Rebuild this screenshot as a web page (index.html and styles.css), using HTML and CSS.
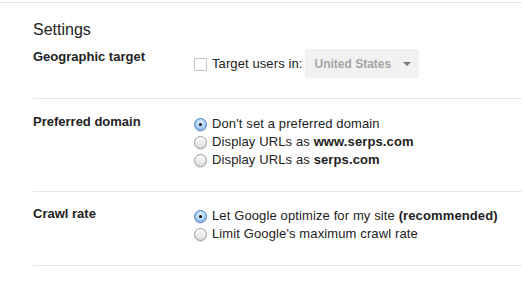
FILE: index.html
```html
<!DOCTYPE html>
<html>
<head>
<meta charset="utf-8">
<link rel="stylesheet" href="styles.css">
</head>
<body>
<div class="page">
  <h1 class="title">Settings</h1>
  <div class="row row-first">
    <div class="label">Geographic target</div>
    <div class="geo">
      <span class="checkbox"></span>
      <span class="opt-text">Target users in:</span>
      <span class="select"><span class="select-text">United States</span><span class="arrow"></span></span>
    </div>
  </div>
  <div class="row">
    <div class="label">Preferred domain</div>
    <div class="options">
      <div class="option"><span class="radio checked"></span><span>Don't set a preferred domain</span></div>
      <div class="option"><span class="radio"></span><span>Display URLs as <b>www.serps.com</b></span></div>
      <div class="option"><span class="radio"></span><span>Display URLs as <b>serps.com</b></span></div>
    </div>
  </div>
  <div class="row row-last">
    <div class="label">Crawl rate</div>
    <div class="options">
      <div class="option"><span class="radio checked"></span><span>Let Google optimize for my site <b>(recommended)</b></span></div>
      <div class="option"><span class="radio"></span><span>Limit Google's maximum crawl rate</span></div>
    </div>
  </div>
</div>
</body>
</html>
```
FILE: styles.css
```css
html, body {
  margin: 0;
  padding: 0;
  background: #fff;
}
body {
  font-family: Arial, "Liberation Sans", sans-serif;
  color: #222;
  font-size: 13px;
}
.page {
  margin-top: 2px;
  width: 522px;
  border-top: 1px solid #e5e5e5;
  padding-top: 17px;
}
.title {
  margin: 0 0 0 33px;
  font-size: 16px;
  font-weight: normal;
  line-height: 20px;
  color: #222;
}
.row {
  margin-left: 33px;
  display: flex;
  align-items: flex-start;
  border-bottom: 1px solid #e5e5e5;
  padding: 14px 0 22px 0;
}
.row-first {
  padding: 8px 0 20px 0;
}
.row-last {
  padding-top: 13px;
}
.label {
  width: 161px;
  flex: none;
  font-weight: bold;
  line-height: 18px;
}
.geo {
  display: flex;
  align-items: center;
  height: 29px;
  margin-top: 1px;
}
.checkbox {
  width: 11px;
  height: 11px;
  border: 1px solid #c4c4c4;
  border-radius: 1px;
  background: #fff;
  margin-right: 5px;
  margin-top: 2px;
}
.opt-text {
  line-height: 18px;
  margin-right: 3px;
  letter-spacing: 0.1px;
}
.select {
  width: 105px;
  height: 29px;
  padding-left: 9px;
  background: #f1f1f1;
  border-radius: 2px;
  display: flex;
  align-items: center;
  justify-content: space-between;
  box-sizing: content-box;
}
.select-text {
  font-size: 12px;
  font-weight: bold;
  color: #a6a6a6;
}
.arrow {
  width: 0;
  height: 0;
  border-left: 4px solid transparent;
  border-right: 4px solid transparent;
  border-top: 4px solid #7a7a7a;
  margin-right: 8px;
  margin-top: 1px;
}
.options {
  margin-top: 2px;
  letter-spacing: 0.12px;
}
.option {
  display: flex;
  align-items: center;
  height: 18px;
  line-height: 18px;
}
.radio {
  width: 11px;
  height: 11px;
  border-radius: 50%;
  border: 1px solid #9a9a9a;
  background: linear-gradient(#fdfdfd, #dcdcdc);
  box-shadow: 0 1px 1px rgba(0,0,0,0.12);
  margin-right: 5px;
  flex: none;
  position: relative;
}
.radio.checked {
  border-color: #4a7fc0;
  background: radial-gradient(circle at 50% 35%, #e4f0fc 0%, #a9cdf2 55%, #74a9e5 100%);
}
.radio.checked::after {
  content: "";
  position: absolute;
  left: 4px;
  top: 4px;
  width: 3px;
  height: 3px;
  border-radius: 50%;
  background: #111;
}
b {
  font-weight: bold;
}
```
